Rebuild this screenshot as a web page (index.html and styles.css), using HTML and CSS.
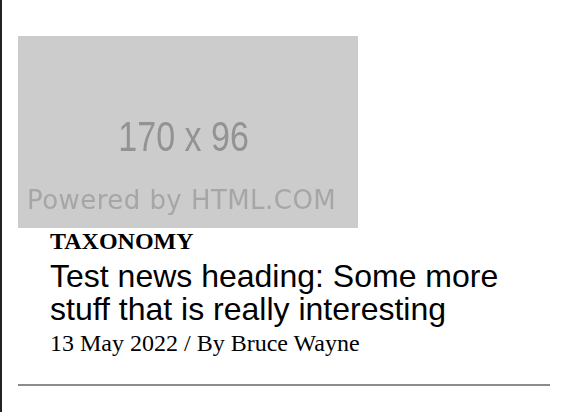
FILE: index.html
```html
<!DOCTYPE html>
<html lang="en">
<head>
<meta charset="utf-8">
<title>News card</title>
<link rel="stylesheet" href="styles.css">
</head>
<body>
<div class="page">
  <article class="card">
    <div class="thumb">
      <span class="thumb-size">170 x 96</span>
      <span class="thumb-credit">Powered by HTML.COM</span>
    </div>
    <div class="card-body">
      <div class="tag">TAXONOMY</div>
      <h2 class="title">Test news heading: Some more stuff that is really interesting</h2>
      <p class="meta">13 May 2022 / By Bruce Wayne</p>
    </div>
  </article>
  <hr class="rule">
</div>
</body>
</html>
```
FILE: styles.css
```css
html, body {
  margin: 0;
  height: 100%;
}
body {
  font-family: "Liberation Serif", "Times New Roman", serif;
  color: #000;
  background: #fff;
}
.page {
  box-sizing: border-box;
  min-height: 100%;
  border-left: 2px solid #222;
  padding: 36px 16px 0 16px;
}
.thumb {
  width: 340px;
  height: 192px;
  background: #cccccc;
  display: flex;
  flex-direction: column;
}
.thumb-size {
  align-self: center;
  margin-top: 80px;
  margin-right: 9px;
  font-family: "Liberation Sans", Arial, sans-serif;
  font-size: 42px;
  line-height: 42px;
  color: #939393;
  transform: scaleX(0.81);
  filter: blur(0.5px);
}
.thumb-credit {
  margin-top: 29px;
  padding-left: 9px;
  font-family: "DejaVu Sans", sans-serif;
  font-size: 26px;
  line-height: 26px;
  letter-spacing: 0.45px;
  color: #a6a6a6;
  filter: blur(0.5px);
  white-space: nowrap;
}
.card-body {
  padding-left: 32px;
}
.tag {
  font-weight: bold;
  font-size: 24px;
  line-height: 26px;
}
.title {
  margin: 6px 0 0;
  font-family: "Liberation Sans", Arial, sans-serif;
  font-weight: 400;
  font-size: 32px;
  line-height: 33px;
}
.meta {
  margin: 4px 0 0;
  font-size: 24px;
  line-height: 27px;
}
.rule {
  margin: 27px 0 0;
  height: 0;
  border: 0;
  border-top: 2px solid #8c8c8c;
}
```
